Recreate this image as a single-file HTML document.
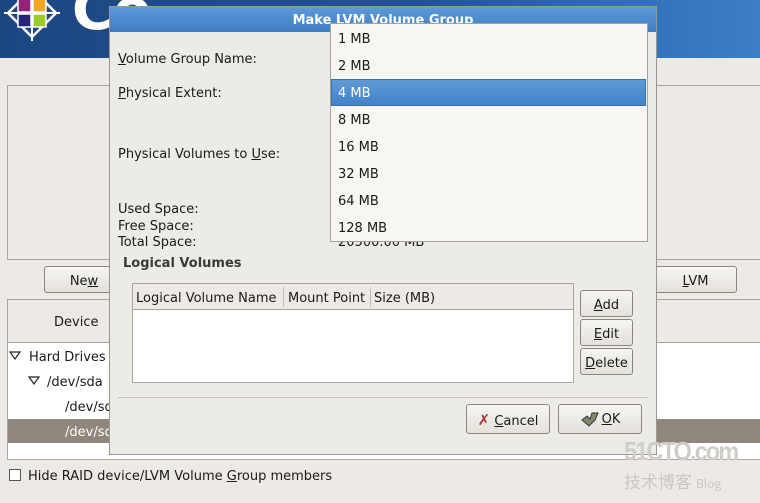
<!DOCTYPE html>
<html><head><style>
*{margin:0;padding:0;box-sizing:border-box}
body{width:760px;height:503px;overflow:hidden;background:#edeae5;font-family:"DejaVu Sans","Liberation Sans",sans-serif;font-size:13px;color:#1a1a1a;position:relative}
.a{position:absolute}
.t{margin-top:2px}
.btn{position:absolute;border:1px solid #8a877f;border-radius:3px;background:linear-gradient(#f6f5f2,#e4e1db);text-align:center;line-height:26px}
u{text-decoration:underline}
</style></head><body>
<div class="a" style="left:0;top:0;width:760px;height:58px;background:linear-gradient(90deg,#1c4783 0%,#22528f 55%,#2f6db5 80%,#3c7fc6 100%)"></div>
<svg class="a" style="left:-1px;top:-20px" width="66" height="66" viewBox="0 0 66 66">
<rect x="16" y="16" width="34" height="34" fill="none" stroke="#fff" stroke-width="2.5" transform="rotate(45 33 33)"/>
<rect x="19" y="19" width="13" height="13" fill="#932279" stroke="#fff" stroke-width="1.5"/><rect x="34" y="19" width="13" height="13" fill="#efa724" stroke="#fff" stroke-width="1.5"/>
<rect x="19" y="34" width="13" height="13" fill="#262577" stroke="#fff" stroke-width="1.5"/><rect x="34" y="34" width="13" height="13" fill="#9ccd2a" stroke="#fff" stroke-width="1.5"/>
<path d="M33 5v56M5 33h56" stroke="#fff" stroke-width="2"/>
</svg>
<div class="a" style="left:72px;top:-22px;font:bold 56px 'DejaVu Sans',sans-serif;color:#fff">Co</div>
<div class="a" style="left:7px;top:85px;width:753px;height:175px;border:1px solid #a9a59c;border-right:none;background:#edeae5"></div>
<div class="btn" style="left:44px;top:266px;width:80px;height:27px"><span class="t" style="display:inline-block">Ne<u>w</u></span></div>
<div class="btn" style="left:640px;top:266px;width:97px;height:27px;padding-left:14px"><span class="t" style="display:inline-block"><u>L</u>VM</span></div>
<div class="a" style="left:7px;top:299px;width:753px;height:161px;border:1px solid #a9a59c;border-right:none;background:#fff"></div>
<div class="a" style="left:8px;top:300px;width:752px;height:43px;background:#edeae5;border-bottom:1px solid #a9a59c"></div>
<div class="a" style="left:54px;top:315px">Device</div>
<svg class="a" style="left:9px;top:351px" width="12" height="9"><path d="M1 1h10L6 8z" fill="none" stroke="#222" stroke-width="1.2"/></svg>
<div class="a" style="left:29px;top:350px">Hard Drives</div>
<svg class="a" style="left:28px;top:376px" width="12" height="9"><path d="M1 1h10L6 8z" fill="none" stroke="#222" stroke-width="1.2"/></svg>
<div class="a" style="left:47px;top:375px">/dev/sda</div>
<div class="a" style="left:65px;top:400px">/dev/sda1</div>
<div class="a" style="left:8px;top:419px;width:752px;height:24px;background:#8f877b"></div>
<div class="a" style="left:65px;top:425px;color:#fff">/dev/sda2</div>
<div class="a" style="left:9px;top:469px;width:12px;height:12px;border:1px solid #555;background:#fff"></div>
<div class="a" style="left:28px;top:469px">Hide RAID device/LVM Volume <u>G</u>roup members</div>

<div class="a" style="left:109px;top:6px;width:548px;height:449px;background:#edebe6;border:1px solid #9a978f"></div>
<div class="a" style="left:110px;top:7px;width:546px;height:25px;background:linear-gradient(#5d9ad8,#3f7cc4);color:#fff;font-weight:bold;text-align:center;line-height:28px">Make LVM Volume Group</div>
<div class="a" style="left:118px;top:52px"><u>V</u>olume Group Name:</div>
<div class="a" style="left:118px;top:86px"><u>P</u>hysical Extent:</div>
<div class="a" style="left:118px;top:147px">Physical Volumes to <u>U</u>se:</div>
<div class="a" style="left:118px;top:202px;line-height:16.5px">Used Space:<br>Free Space:<br>Total Space:</div>
<div class="a" style="left:338px;top:235px">20500.00 MB</div>
<div class="a" style="left:123px;top:256px;font-weight:bold;color:#3a3a3a">Logical Volumes</div>
<div class="a" style="left:132px;top:283px;width:442px;height:100px;border:1px solid #a9a59c;background:#fff"></div>
<div class="a" style="left:133px;top:284px;width:440px;height:26px;background:#edeae5;border-bottom:1px solid #a9a59c"></div>
<div class="a" style="left:283px;top:287px;width:1px;height:20px;background:#c0bcb4"></div>
<div class="a" style="left:370px;top:287px;width:1px;height:20px;background:#c0bcb4"></div>
<div class="a" style="left:136px;top:291px">Logical Volume Name</div>
<div class="a" style="left:288px;top:291px">Mount Point</div>
<div class="a" style="left:374px;top:291px">Size (MB)</div>
<div class="btn" style="left:580px;top:290px;width:53px;height:27px"><span class="t" style="display:inline-block"><u>A</u>dd</span></div>
<div class="btn" style="left:580px;top:319px;width:53px;height:27px"><span class="t" style="display:inline-block"><u>E</u>dit</span></div>
<div class="btn" style="left:580px;top:348px;width:53px;height:27px"><span class="t" style="display:inline-block"><u>D</u>elete</span></div>
<div class="a" style="left:118px;top:397px;width:530px;height:1px;background:#c8c4bc"></div>
<div class="btn" style="left:466px;top:404px;width:84px;height:30px;line-height:30px"><span style="color:#a33;font-weight:bold;font-size:15px">✗</span> <u>C</u>ancel</div>
<div class="btn" style="left:558px;top:404px;width:84px;height:30px;line-height:30px"><svg width="22" height="18" viewBox="0 0 22 18" style="vertical-align:-4px"><path d="M2 11l5-4 3 3 2-6h6l-3 7-6 6z" fill="#7b8a6c" stroke="#333" stroke-width="1"/></svg><u>O</u>K</div>

<div class="a" style="left:330px;top:23px;width:318px;height:219px;background:#f7f6f2;border:1px solid #a6a29a"></div>
<div class="a" style="left:331px;top:79px;width:315px;height:27px;background:linear-gradient(#5f9ad6,#4182c8);border:1px solid #3b6ea8"></div>
<div class="a" style="left:338px;top:26px;line-height:27px">1 MB<br>2 MB<br><span style="color:#fff">4 MB</span><br>8 MB<br>16 MB<br>32 MB<br>64 MB<br>128 MB</div>

<div class="a" style="left:624px;top:436px;font:bold 26px 'Liberation Sans',sans-serif;color:#cfcdc8;letter-spacing:-2px;transform:scaleX(0.9);transform-origin:left">51CTO.com</div>
<div class="a" style="left:624px;top:468px;font-size:17px;color:#c9c7c2;font-family:'Noto Sans CJK SC',sans-serif">技术博客 <span style="font-size:12px">Blog</span></div>
</body></html>
